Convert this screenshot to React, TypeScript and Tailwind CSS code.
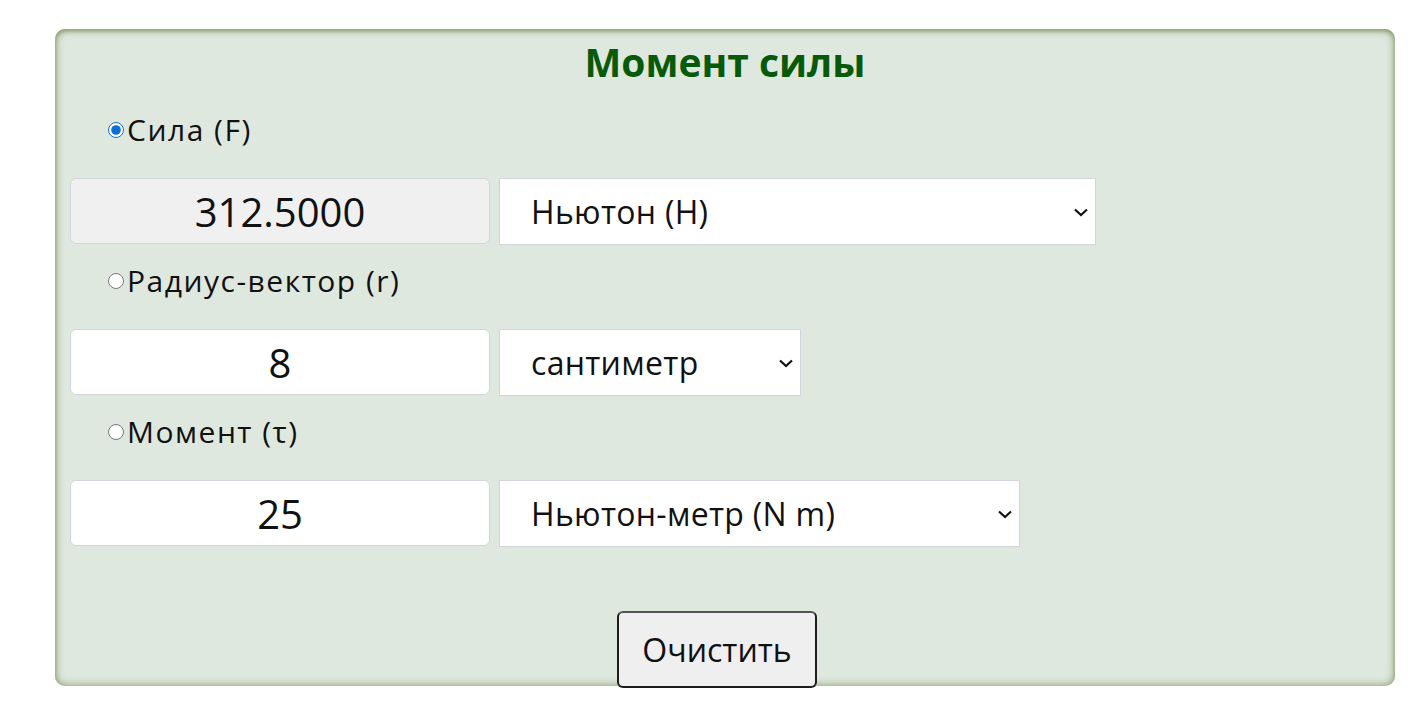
import { useState } from "react";

const rows = [
  {
    id: "force",
    label: "Сила (F)",
    value: "312.5000",
    readOnly: true,
    unit: "Ньютон (Н)",
    units: ["Ньютон (Н)", "Килоньютон (кН)", "Дина (дин)"],
    selectWidth: "w-[597px]",
  },
  {
    id: "radius",
    label: "Радиус-вектор (r)",
    value: "8",
    readOnly: false,
    unit: "сантиметр",
    units: ["сантиметр", "метр", "миллиметр"],
    selectWidth: "w-[302px]",
  },
  {
    id: "moment",
    label: "Момент (τ)",
    value: "25",
    readOnly: false,
    unit: "Ньютон-метр (N m)",
    units: ["Ньютон-метр (N m)", "Килоньютон-метр (kN m)"],
    selectWidth: "w-[521px]",
  },
];

export default function App() {
  const [solveFor, setSolveFor] = useState("force");

  return (
    <div className="min-h-[713px] bg-white pt-[29px] pl-[55px] font-['Open_Sans','Liberation_Sans',sans-serif] text-[#111]">
      <div className="relative w-[1340px] h-[657px] rounded-[10px] bg-[#dfe8df] shadow-[inset_0_0_10px_#8a9c6c,inset_0_2px_4px_#94a67a]">
        <div className="h-[65px] flex items-center justify-center">
          <h1 className="text-[39px] font-bold text-[#075a07] leading-none">Момент силы</h1>
        </div>

        {rows.map((row) => (
          <div key={row.id}>
            <div className="h-[84px] pb-[12px] flex items-center pl-[53px]">
              <label className="flex items-center gap-[3px] text-[30px] tracking-[1.5px] leading-none">
                <input
                  type="radio"
                  name="solve"
                  checked={solveFor === row.id}
                  onChange={() => setSolveFor(row.id)}
                  className="w-4 h-4 accent-[#0b6fd6]"
                />
                {row.label}
              </label>
            </div>
            <div className="flex gap-[9px] pl-[15px] h-[67px]">
              <input
                type="text"
                defaultValue={row.value}
                readOnly={row.readOnly}
                className={`w-[420px] h-[66px] rounded-[6px] border border-[#d2d6dc] text-center text-[40px] outline-none ${row.readOnly ? "bg-[#f0f0f0]" : "bg-white"}`}
              />
              <div className={`relative ${row.selectWidth} h-[67px]`}>
                <select
                  defaultValue={row.unit}
                  className="w-full h-full appearance-none border border-[#d2d6dc] bg-white pl-[31px] pr-[30px] text-[32px] tracking-[0.3px] outline-none"
                >
                  {row.units.map((u) => (
                    <option key={u}>{u}</option>
                  ))}
                </select>
                <svg
                  className="pointer-events-none absolute right-[7px] top-1/2 -translate-y-1/2"
                  width="16"
                  height="10"
                  viewBox="0 0 16 10"
                  fill="none"
                  stroke="#111"
                  strokeWidth="2.2"
                >
                  <path d="M2 2.5 8 8l6-5.5" />
                </svg>
              </div>
            </div>
          </div>
        ))}

        <div className="flex justify-center pt-[64px] pr-[16px]">
          <button className="w-[200px] h-[77px] rounded-[6px] border-2 border-[#1d1d1d] border-t-[#555] bg-[#efefef] text-[32px] text-[#111]">
            Очистить
          </button>
        </div>
      </div>
    </div>
  );
}
